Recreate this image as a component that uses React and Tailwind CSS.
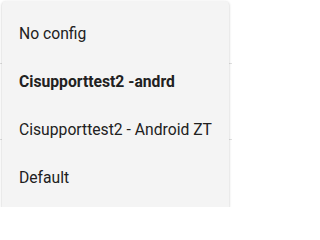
import { useState } from "react";

const options = [
  { id: "none", label: "No config" },
  { id: "andrd", label: "Cisupporttest2 -andrd" },
  { id: "zt", label: "Cisupporttest2 - Android ZT" },
  { id: "default", label: "Default" },
];

export default function App() {
  const [selected, setSelected] = useState("andrd");

  return (
    <div className="relative w-[232px] h-[207px] overflow-hidden bg-white font-['Roboto',sans-serif]">
      {/* list behind the menu */}
      <div className="flex flex-col">
        <div className="h-[64px] border-b border-[#e0e0e0]" />
        <div className="h-[76px] border-b border-[#e0e0e0]" />
        <div className="h-[66px]" />
      </div>

      {/* dropdown menu */}
      <ul className="absolute left-[2px] top-[1px] w-[227px] pt-[9px] pb-2 bg-[#f4f4f4] rounded-sm shadow-[0_1px_3px_rgba(0,0,0,0.2),0_1px_1px_rgba(0,0,0,0.14)]">
        {options.map((opt) => (
          <li
            key={opt.id}
            onClick={() => setSelected(opt.id)}
            className={`h-12 flex items-center pl-[17px] text-[15.7px] text-[#212121] cursor-pointer whitespace-nowrap ${
              selected === opt.id ? "font-bold" : "font-normal"
            }`}
          >
            {opt.label}
          </li>
        ))}
      </ul>
    </div>
  );
}
